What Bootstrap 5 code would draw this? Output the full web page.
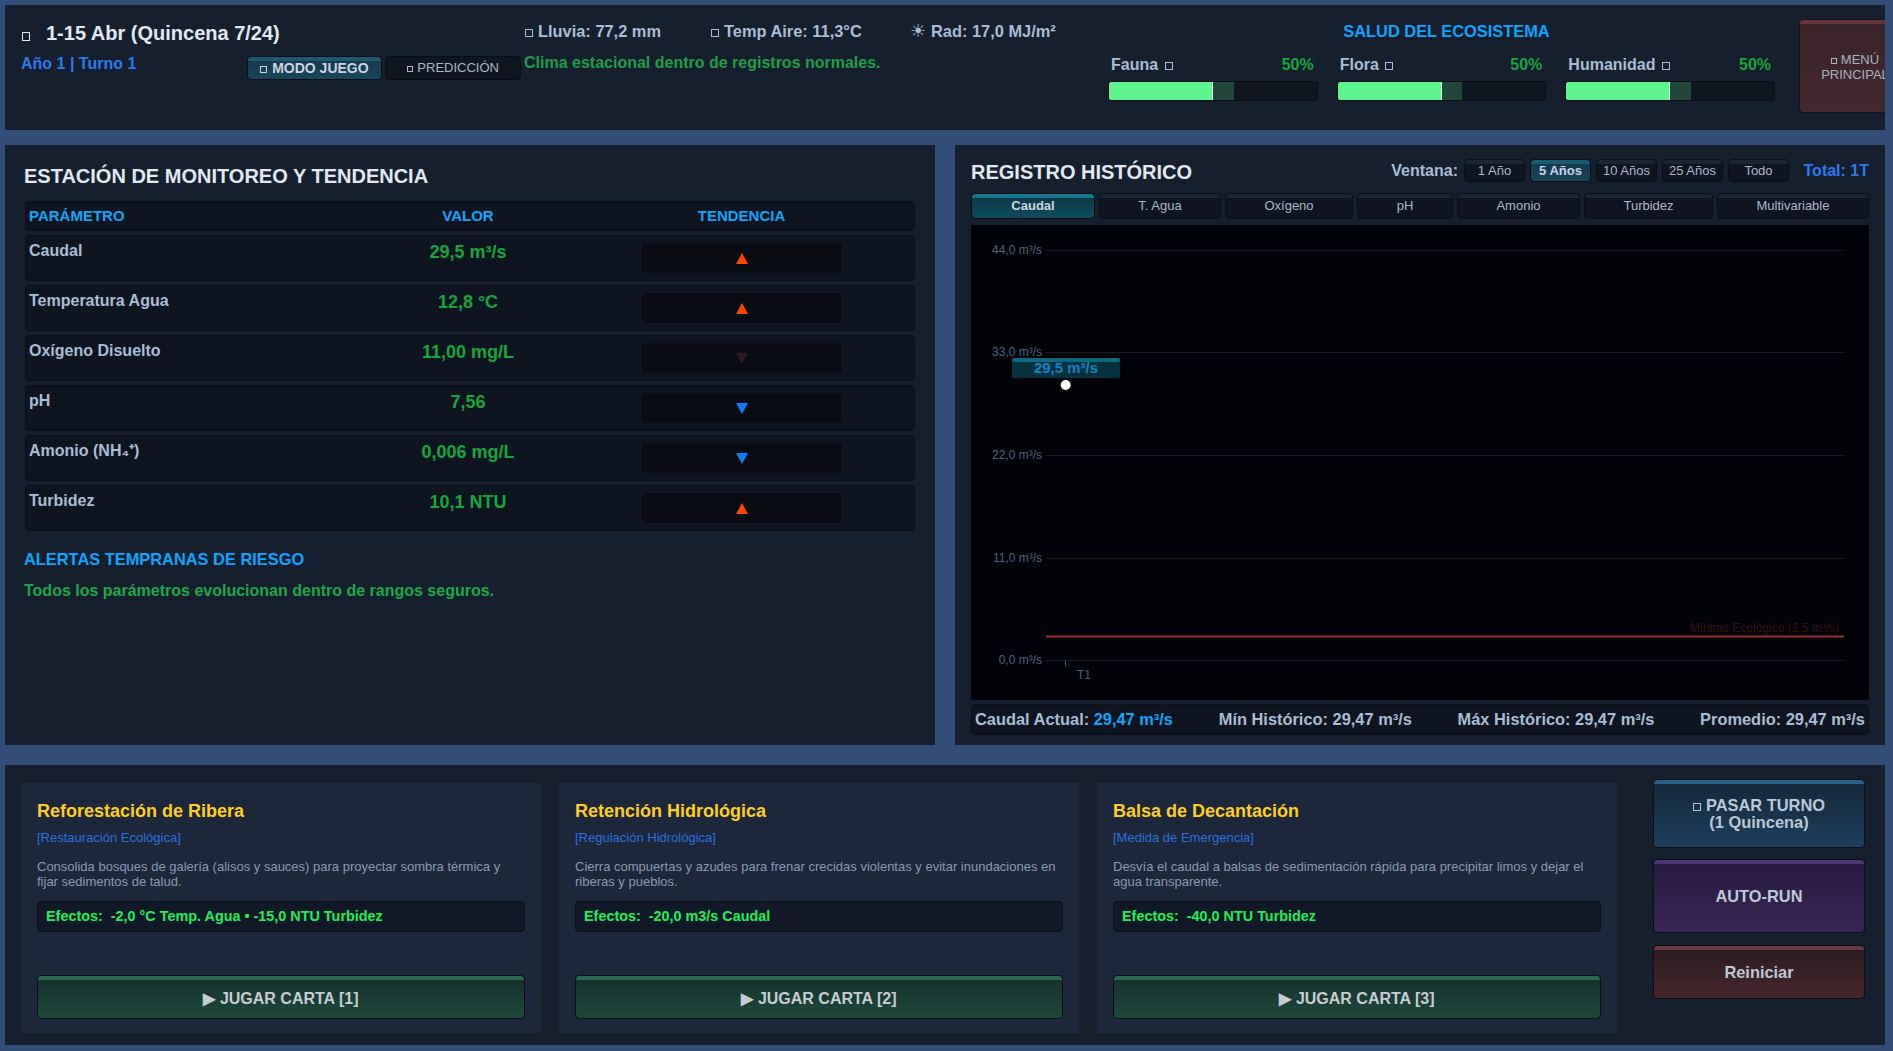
<!DOCTYPE html>
<html lang="es">
<head>
<meta charset="utf-8">
<title>Simulador de ecosistema</title>
<link href="https://cdn.jsdelivr.net/npm/bootstrap@5.3.0/dist/css/bootstrap.min.css" rel="stylesheet">
<style>
html,body{height:1051px;overflow:hidden}
body{background:#314d78;font-family:"Liberation Sans",Arial,sans-serif;color:#a9bdd6;padding:5px 8px 6px 5px;font-size:16px;line-height:1.2}
.pane{background:#151f2e}
.pane-top{height:125px;padding:0 0 0 15px;overflow:hidden;margin-bottom:15px;width:1880px}
.pane-mid{height:600px;width:930px}
.mid-row{gap:20px;margin-bottom:20px;width:1880px}
.pane-bot{height:280px;width:1880px;padding:18px 21px 12px 16px}
.tofu{display:inline-block;width:8px;height:8px;border:1px solid currentColor;vertical-align:0;margin-right:5px}
.col-left{width:504px;padding-top:19px;flex:none}
.head-title{font-size:20px;font-weight:700;color:#e2e8f0;height:19px;line-height:19px;margin-left:2px}
.head-title .tofu{margin-right:16px;border-width:1.5px;height:9px;vertical-align:-1px}
.year{font-weight:700;font-size:16px;color:#2a7bf0;width:226px;margin-left:1px;align-self:flex-start;margin-top:-1px;line-height:18px}
.row-two{margin-top:13px;align-items:center;height:24px}
.mode{width:136px;height:24px;font-size:13px;border-radius:4px;border:1px solid #0a0e15;background:#10161f;color:#a9b8cc;padding:0;margin-right:3px;line-height:22px}
.mode .tofu{width:6px;height:6px;margin-right:4px}
.mode-on{background:linear-gradient(#1a5b73 0 4px,#153a4e 4px,#17465c);font-weight:700;color:#cbd5e1;font-size:14px}
.mode-on .tofu{width:7px;height:7px;margin-right:5px}
.col-mid{width:584px;padding-top:17px;flex:none}
.wx{font-weight:700;font-size:16.4px;color:#a9bdd6;height:18px;line-height:18px}
.wx1{width:186px;margin-left:1px}.wx2{width:199px}
.sun{font-size:18px;font-weight:400;margin-right:5px;line-height:16px}
.clima{font-weight:700;font-size:16px;color:#1f9e47;margin-top:14px;line-height:18px}
.col-eco{width:667px;padding-top:17px;flex:none}
.eco-title{text-align:center;font-weight:700;font-size:16.4px;color:#0ea5ff;line-height:18px;padding-left:10px}
.gauges{gap:19px;margin-top:16px}
.gauge{width:210px}
.gauge-top{padding:0 4px 0 3px;font-weight:700;font-size:16px;line-height:18px;height:25px}
.gauge-top .tofu{margin-left:2px}
.gauge-pct{color:#17a63c}
.bar{height:20px;background:#10161f;border:1px solid #0a0e15;border-radius:3px;overflow:hidden;position:relative;display:flex}
.bar-fill{width:50%;background:#5ef58f;border-right:1px solid #eafff0}
.bar-ghost{width:10%;background:#22473a}
.menu-btn{width:112px;height:94px;flex:none;margin:14px 0 0 24px;border:1px solid #0f1520;border-radius:4px;background:linear-gradient(#6a333b 0 4px,#3a2329 4px,#45282f);color:#a9b3c1;font-size:13px;line-height:15px;padding:2px 0 0}
.menu-btn .tofu{width:6px;height:6px;margin-right:4px}
.pane-left{padding:0 19px 0 20px}
.h-pane{font-size:20px;font-weight:700;color:#e2e8f0;margin:0}
.pane-left .h-pane{padding-top:22px;height:56px;line-height:19px;margin-left:-1px}
.t-row{display:grid;grid-template-columns:343px 198px 349px;background:#0f1520;border:1px solid #0a0e15;border-radius:4px;width:890px}
.t-head{height:30px;font-weight:700;font-size:15px;color:#0ea5ff;align-items:center;margin-bottom:4px}
.t-head>div:first-child,.t-data>div:first-child{padding-left:3px}
.t-data{height:46px;margin-bottom:4px;font-weight:700;font-size:16px}
.t-data>div{padding-top:7px;line-height:18px}
.t-data>.t-label{color:#a9bdd6;padding-top:6px}
.t-data>.t-val{color:#17a63c;text-align:center;font-size:18px}
.t-head>div{text-align:center}
.t-head>div:first-child{text-align:left}
.trend-box{width:200px;height:30px;background:#090c12;border:1px solid #0a0e15;border-radius:3px;margin:0 auto;display:flex;align-items:center;justify-content:center}
.alert-h{font-weight:700;font-size:16.4px;color:#0ea5ff;margin-top:19px;line-height:18px;margin-left:-1px}
.alert-ok{font-weight:700;font-size:16px;color:#1fa847;margin-top:14px;line-height:18px;margin-left:-1px}
.pane-right{padding:0 16px 0 16px}
.hist-head{height:48px;padding-top:14px}
.hist-head .h-pane{padding-top:2px;line-height:22px}
.ventana{font-weight:700;font-size:16px;margin-right:6px;padding-top:2px}
.win-btn{width:61px;height:23px;margin-right:5px;padding:0;font-size:13px;line-height:21px;border:1px solid #0a0e15;border-radius:4px;background:linear-gradient(#1b2534 0 4px,#0f1520 4px);color:#a9b8cc}
.win-on{background:linear-gradient(#1a5b73 0 4px,#153a4e 4px,#17465c);color:#cbd5e1;font-weight:700}
.total{font-weight:700;font-size:16px;color:#2a7bf0;margin-left:7px;width:68px;text-align:right;padding-top:2px;white-space:nowrap}
.tabs{display:grid;grid-template-columns:124px 122px 128px 96px 123px 129px 152px;gap:4px;height:26px;margin-bottom:6px}
.tab-btn{padding:0;height:26px;font-size:13px;border:1px solid #0a0e15;border-radius:4px;background:linear-gradient(#1b2534 0 4px,#0f1520 4px);color:#a9b8cc}
.tab-on{background:linear-gradient(#14758c 0 4px,#0b3a4a 4px,#0e4b5c);color:#cbd5e1;font-weight:700}
.chart{display:block;width:898px;height:475px;background:#020308}
.axis{font-family:"Liberation Sans",Arial,sans-serif;font-size:12px;fill:#4a6384}
.stats{height:31px;margin-top:4px;background:#0f1520;border:1px solid #0a0e15;border-radius:4px;padding:0 3px;font-weight:700;font-size:16.4px}
.stats b{color:#0ea5ff}
.play-card{width:520px;height:250px;background:#1c273c;padding:19px 16px 14px;margin-right:18px;display:flex;flex-direction:column;flex:none}
.play-card:nth-child(3){margin-right:36px}
.play-title{font-size:18px;font-weight:700;color:#ffce1f;line-height:19px}
.play-sub{font-size:13px;color:#2a72dd;margin-top:9px;line-height:15px}
.play-desc{font-size:13px;color:#8a9ab0;line-height:15px;margin-top:14px;height:30px;padding-right:3px}
.play-fx{height:31px;margin-top:12px;background:#111827;border:1px solid #0a0e15;border-radius:4px;font-size:14.4px;font-weight:700;color:#1ef05a;padding:0 8px;line-height:29px;white-space:pre}
.play-btn{height:44px;margin-top:auto;border:1px solid #0a0e15;border-radius:4px;background:linear-gradient(#276a50 0 4px,#17302e 4px,#1c4a3a);color:#c5cdd3;font-weight:700;font-size:16px;padding:3px 0 0}
.act-col{width:212px;gap:11px;margin-top:-4px;flex:none}
.act-btn{width:212px;border:1px solid #0a0e15;border-radius:4px;font-weight:700;font-size:16.4px;color:#bcc8d6;line-height:17px;padding:0}
.act-a{height:69px;background:linear-gradient(#27608a 0 4px,#13293b 4px,#1d3f5e)}
.act-b{height:74px;background:linear-gradient(#4e3578 0 4px,#271a40 4px,#3a2558)}
.act-c{height:54px;margin-top:1px;background:linear-gradient(#653840 0 4px,#2c1c22 4px,#47272d)}
</style>
</head>
<body>
<header class="pane pane-top d-flex">
  <div class="col-left">
    <div class="head-title"><span class="tofu"></span>1-15 Abr (Quincena 7/24)</div>
    <div class="d-flex row-two">
      <div class="year">Año 1 | Turno 1</div>
      <button class="btn mode mode-on"><span class="tofu"></span>MODO JUEGO</button>
      <button class="btn mode"><span class="tofu"></span>PREDICCIÓN</button>
    </div>
  </div>
  <div class="col-mid">
    <div class="d-flex wx">
      <div class="wx1"><span class="tofu"></span>Lluvia: 77,2 mm</div>
      <div class="wx2"><span class="tofu"></span>Temp Aire: 11,3°C</div>
      <div><span class="sun">☀</span>Rad: 17,0 MJ/m²</div>
    </div>
    <div class="clima">Clima estacional dentro de registros normales.</div>
  </div>
  <div class="col-eco">
    <div class="eco-title">SALUD DEL ECOSISTEMA</div>
    <div class="d-flex gauges">
      <div class="gauge"><div class="d-flex justify-content-between gauge-top"><span>Fauna <span class="tofu"></span></span><span class="gauge-pct">50%</span></div><div class="bar"><div class="bar-fill"></div><div class="bar-ghost"></div></div></div>
      <div class="gauge"><div class="d-flex justify-content-between gauge-top"><span>Flora <span class="tofu"></span></span><span class="gauge-pct">50%</span></div><div class="bar"><div class="bar-fill"></div><div class="bar-ghost"></div></div></div>
      <div class="gauge"><div class="d-flex justify-content-between gauge-top"><span>Humanidad <span class="tofu"></span></span><span class="gauge-pct">50%</span></div><div class="bar"><div class="bar-fill"></div><div class="bar-ghost"></div></div></div>
    </div>
  </div>
  <button class="btn menu-btn"><span class="tofu"></span>MENÚ<br>PRINCIPAL</button>
</header>

<div class="d-flex mid-row">
  <section class="pane pane-mid pane-left">
    <h2 class="h-pane">ESTACIÓN DE MONITOREO Y TENDENCIA</h2>
    <div class="t-row t-head"><div>PARÁMETRO</div><div>VALOR</div><div>TENDENCIA</div></div>
    <div class="t-row t-data"><div class="t-label">Caudal</div><div class="t-val">29,5 m³/s</div><div class="t-trend"><div class="trend-box"><svg width="12" height="11" viewBox="0 0 12 11"><polygon points="6,0 12,11 0,11" fill="#ff4500"/></svg></div></div></div>
    <div class="t-row t-data"><div class="t-label">Temperatura Agua</div><div class="t-val">12,8 °C</div><div class="t-trend"><div class="trend-box"><svg width="12" height="11" viewBox="0 0 12 11"><polygon points="6,0 12,11 0,11" fill="#ff4500"/></svg></div></div></div>
    <div class="t-row t-data"><div class="t-label">Oxígeno Disuelto</div><div class="t-val">11,00 mg/L</div><div class="t-trend"><div class="trend-box"><svg width="12" height="11" viewBox="0 0 12 11"><polygon points="0,0 12,0 6,11" fill="#2b1a21"/></svg></div></div></div>
    <div class="t-row t-data"><div class="t-label">pH</div><div class="t-val">7,56</div><div class="t-trend"><div class="trend-box"><svg width="12" height="11" viewBox="0 0 12 11"><polygon points="0,0 12,0 6,11" fill="#0a7cff"/></svg></div></div></div>
    <div class="t-row t-data"><div class="t-label">Amonio (NH₄⁺)</div><div class="t-val">0,006 mg/L</div><div class="t-trend"><div class="trend-box"><svg width="12" height="11" viewBox="0 0 12 11"><polygon points="0,0 12,0 6,11" fill="#0a7cff"/></svg></div></div></div>
    <div class="t-row t-data"><div class="t-label">Turbidez</div><div class="t-val">10,1 NTU</div><div class="t-trend"><div class="trend-box"><svg width="12" height="11" viewBox="0 0 12 11"><polygon points="6,0 12,11 0,11" fill="#ff4500"/></svg></div></div></div>
    <div class="alert-h">ALERTAS TEMPRANAS DE RIESGO</div>
    <div class="alert-ok">Todos los parámetros evolucionan dentro de rangos seguros.</div>
  </section>

  <section class="pane pane-mid pane-right">
    <div class="d-flex align-items-start hist-head">
      <h2 class="h-pane me-auto">REGISTRO HISTÓRICO</h2>
      <span class="ventana">Ventana:</span>
      <button class="btn win-btn">1 Año</button>
      <button class="btn win-btn win-on">5 Años</button>
      <button class="btn win-btn">10 Años</button>
      <button class="btn win-btn">25 Años</button>
      <button class="btn win-btn">Todo</button>
      <span class="total">Total: 1T</span>
    </div>
    <div class="tabs">
      <button class="btn tab-btn tab-on">Caudal</button>
      <button class="btn tab-btn">T. Agua</button>
      <button class="btn tab-btn">Oxígeno</button>
      <button class="btn tab-btn">pH</button>
      <button class="btn tab-btn">Amonio</button>
      <button class="btn tab-btn">Turbidez</button>
      <button class="btn tab-btn">Multivariable</button>
    </div>
    <svg class="chart" viewBox="0 0 898 475">
      <g stroke="#181c24" stroke-width="1">
        <line x1="75" x2="873" y1="25.5" y2="25.5"/>
        <line x1="75" x2="873" y1="127.5" y2="127.5"/>
        <line x1="75" x2="873" y1="230.5" y2="230.5"/>
        <line x1="75" x2="873" y1="333.5" y2="333.5"/>
        <line x1="75" x2="873" y1="435.5" y2="435.5"/>
      </g>
      <g class="axis" text-anchor="end">
        <text x="71" y="29">44,0 m³/s</text>
        <text x="71" y="131">33,0 m³/s</text>
        <text x="71" y="234">22,0 m³/s</text>
        <text x="71" y="337">11,0 m³/s</text>
        <text x="71" y="439">0,0 m³/s</text>
      </g>
      <line x1="75" x2="873" y1="411.5" y2="411.5" stroke="#a02c30" stroke-width="2"/>
      <text x="868" y="407" text-anchor="end" font-size="12" font-family="Liberation Sans, Arial, sans-serif" fill="#3a1018">Mínimo Ecológico (2.5 m³/s)</text>
      <line x1="94.5" x2="94.5" y1="436" y2="441" stroke="#4a6384"/>
      <text class="axis" x="113" y="454" text-anchor="middle">T1</text>
      <rect x="41" y="133" width="108" height="20" rx="2" fill="#06323f"/>
      <rect x="41" y="133" width="108" height="4" rx="2" fill="#0e6a80"/>
      <text x="95" y="148" text-anchor="middle" font-size="15" font-weight="700" font-family="Liberation Sans, Arial, sans-serif" fill="#0a86c8">29,5 m³/s</text>
      <circle cx="94.7" cy="160" r="5" fill="#fff"/>
    </svg>
    <div class="d-flex justify-content-between align-items-center stats">
      <span>Caudal Actual: <b>29,47 m³/s</b></span>
      <span>Mín Histórico: 29,47 m³/s</span>
      <span>Máx Histórico: 29,47 m³/s</span>
      <span>Promedio: 29,47 m³/s</span>
    </div>
  </section>
</div>

<section class="pane pane-bot d-flex">
  <article class="play-card">
    <div class="play-title">Reforestación de Ribera</div>
    <div class="play-sub">[Restauración Ecológica]</div>
    <div class="play-desc">Consolida bosques de galería (alisos y sauces) para proyectar sombra térmica y fijar sedimentos de talud.</div>
    <div class="play-fx">Efectos:  -2,0 °C Temp. Agua • -15,0 NTU Turbidez</div>
    <button class="btn play-btn">▶ JUGAR CARTA [1]</button>
  </article>
  <article class="play-card">
    <div class="play-title">Retención Hidrológica</div>
    <div class="play-sub">[Regulación Hidrológica]</div>
    <div class="play-desc">Cierra compuertas y azudes para frenar crecidas violentas y evitar inundaciones en riberas y pueblos.</div>
    <div class="play-fx">Efectos:  -20,0 m3/s Caudal</div>
    <button class="btn play-btn">▶ JUGAR CARTA [2]</button>
  </article>
  <article class="play-card">
    <div class="play-title">Balsa de Decantación</div>
    <div class="play-sub">[Medida de Emergencia]</div>
    <div class="play-desc">Desvía el caudal a balsas de sedimentación rápida para precipitar limos y dejar el agua transparente.</div>
    <div class="play-fx">Efectos:  -40,0 NTU Turbidez</div>
    <button class="btn play-btn">▶ JUGAR CARTA [3]</button>
  </article>
  <div class="d-flex flex-column act-col">
    <button class="btn act-btn act-a"><span class="tofu"></span>PASAR TURNO<br>(1 Quincena)</button>
    <button class="btn act-btn act-b">AUTO-RUN</button>
    <button class="btn act-btn act-c">Reiniciar</button>
  </div>
</section>
<script src="https://cdn.jsdelivr.net/npm/bootstrap@5.3.0/dist/js/bootstrap.bundle.min.js"></script>
</body>
</html>
